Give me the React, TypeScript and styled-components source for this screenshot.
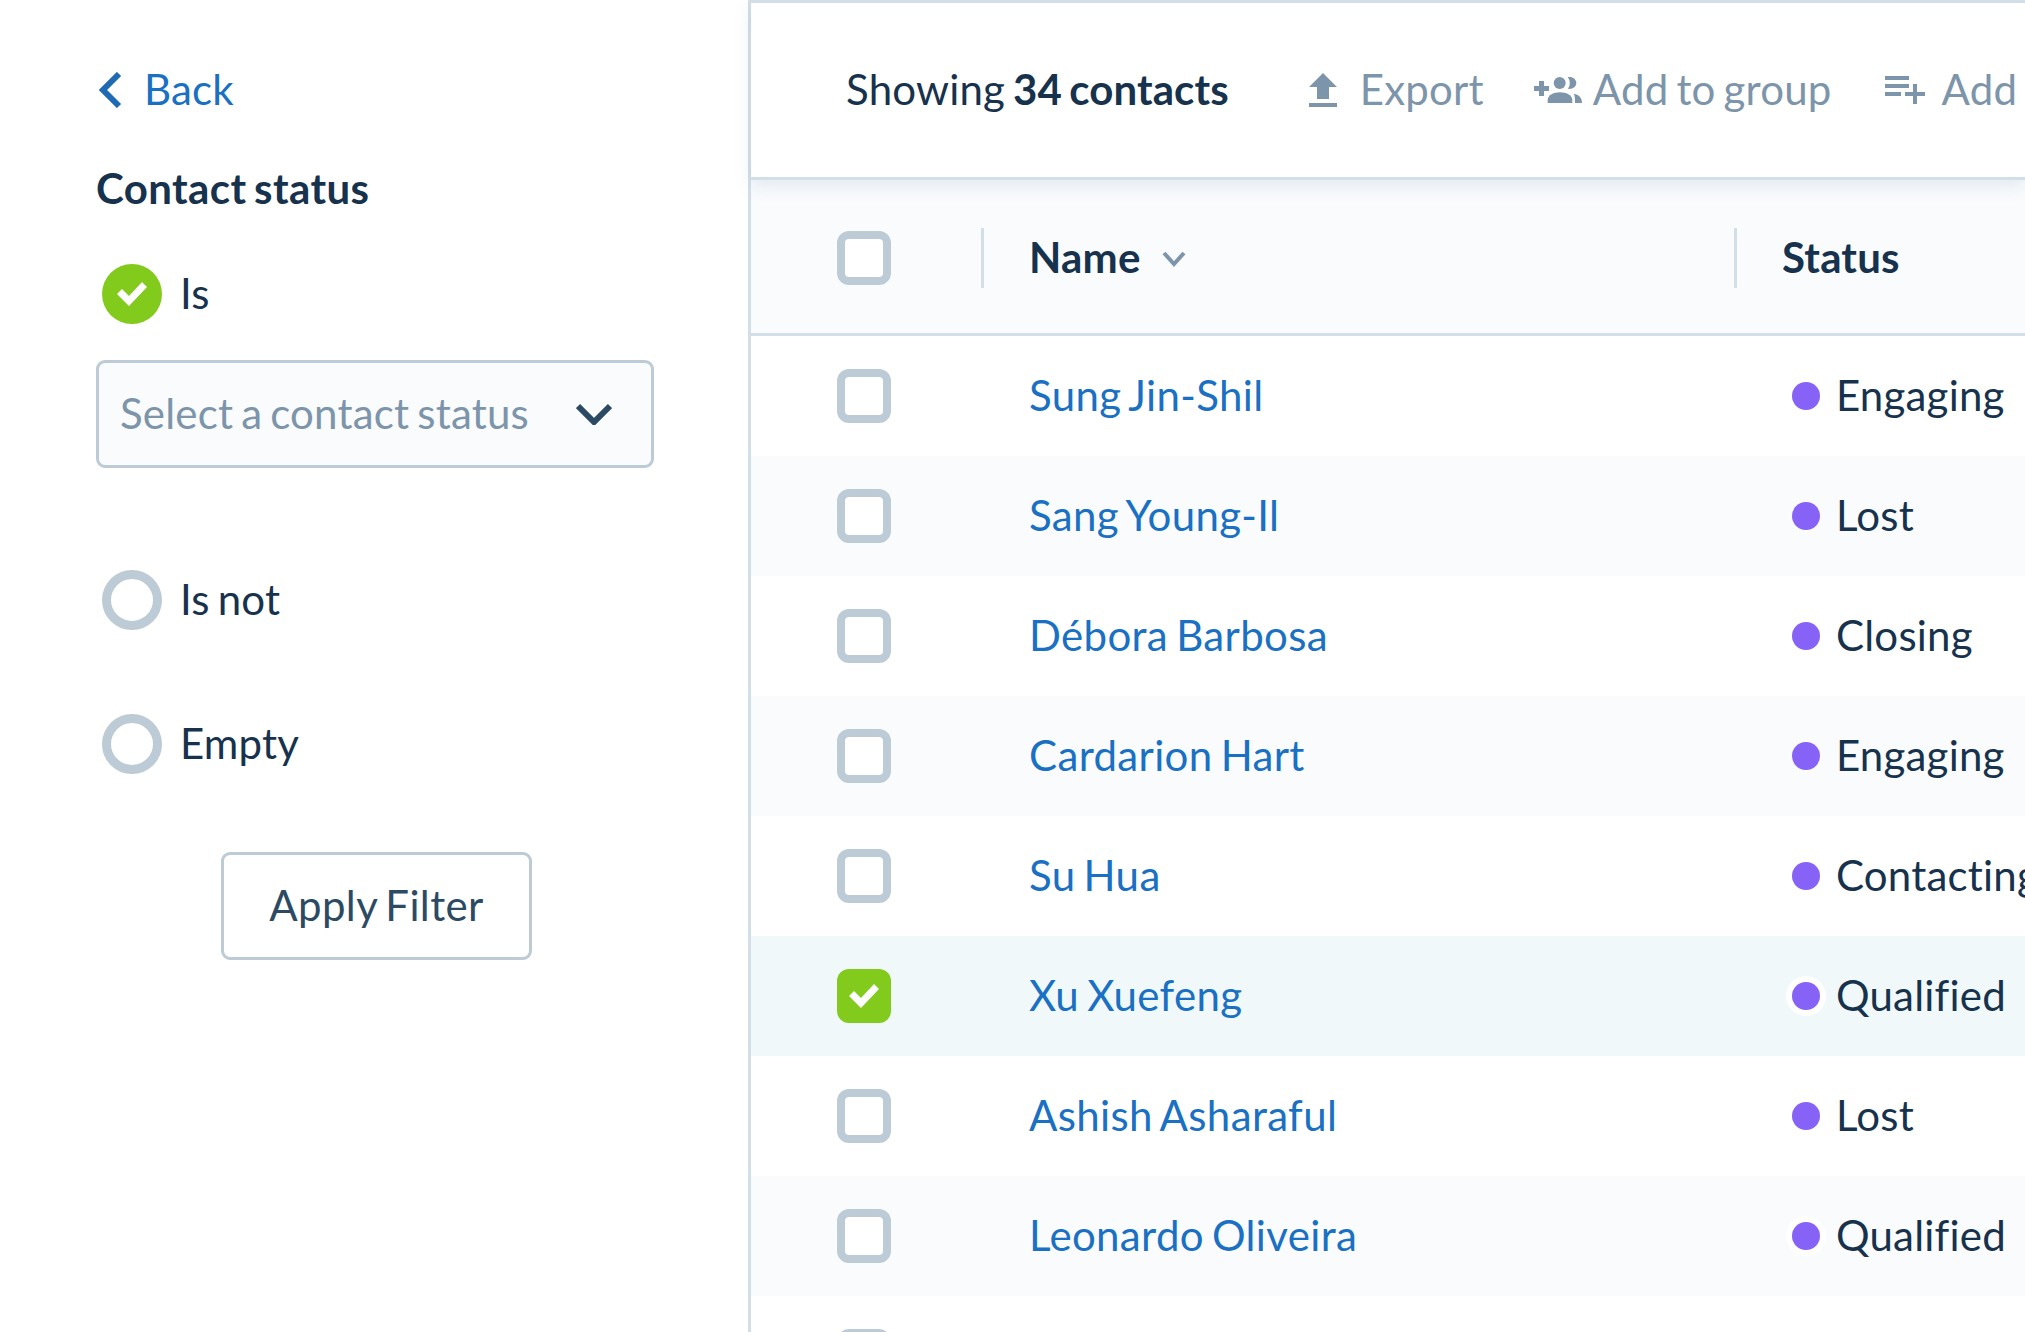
import React from 'react';
import styled, { createGlobalStyle } from 'styled-components';

const GlobalStyle = createGlobalStyle`
  html, body {
    margin: 0;
    padding: 0;
    background: #fff;
  }
  * {
    box-sizing: border-box;
  }
`;

const Page = styled.div`
  display: flex;
  width: 2025px;
  height: 1332px;
  overflow: hidden;
  font-family: Lato, "Liberation Sans", sans-serif;
  font-size: 42px;
  letter-spacing: 0.2px;
  word-spacing: -3px;
  color: #17324d;
  background: #fff;
`;

/* Text sits a little higher than its box centre in the reference */
const Label = styled.span`
  display: block;
  padding-bottom: 3px;
`;

const Sidebar = styled.aside`
  flex: 0 0 751px;
  padding: 60px 0 0 96px;
  border-right: 3px solid #d3dfe8;
`;

const BackLink = styled.a`
  display: flex;
  align-items: center;
  gap: 22px;
  height: 60px;
  padding-left: 3px;
  color: #1a70c2;
`;

const FilterTitle = styled.h2`
  margin: 38px 0 0;
  height: 60px;
  line-height: 60px;
  font-size: 42px;
  font-weight: 700;
  letter-spacing: 0.4px;
`;

const RadioRow = styled.label<{ $top: number }>`
  display: flex;
  align-items: center;
  gap: 18px;
  height: 60px;
  margin: ${(p) => p.$top}px 0 0 6px;
`;

const Radio = styled.span<{ $checked?: boolean }>`
  display: flex;
  align-items: center;
  justify-content: center;
  width: 60px;
  height: 60px;
  border-radius: 50%;
  border: ${(p) => (p.$checked ? 'none' : '9px solid #bccbd6')};
  background: ${(p) => (p.$checked ? '#82ca1c' : '#fff')};
`;

const SelectBox = styled.div`
  display: flex;
  align-items: center;
  justify-content: space-between;
  width: 558px;
  height: 108px;
  margin-top: 36px;
  padding: 0 39px 0 21px;
  border: 3px solid #bccbd6;
  border-radius: 9px;
  background: #f9fbfd;
  color: #7d95aa;
`;

const ApplyButton = styled.button`
  display: block;
  width: 311px;
  height: 108px;
  margin: 78px 0 0 125px;
  padding: 0 0 3px;
  border: 3px solid #bccbd6;
  border-radius: 9px;
  background: #fff;
  color: #2c4a63;
  font: inherit;
  letter-spacing: 0.4px;
  word-spacing: inherit;
`;

const Main = styled.main`
  flex: 1;
  min-width: 0;
`;

const Toolbar = styled.header`
  position: relative;
  display: flex;
  align-items: center;
  height: 180px;
  padding-left: 95px;
  border-top: 3px solid #d3dfe8;
  border-bottom: 3px solid #d3dfe8;
  background: #fff;
  box-shadow: 0 6px 16px rgba(120, 145, 165, 0.16);
  white-space: nowrap;
`;

const Showing = styled(Label)`
  b {
    font-weight: 700;
    letter-spacing: 0.1px;
  }
`;

const ToolAction = styled.div<{ $left: number; $gap: number }>`
  display: flex;
  align-items: center;
  flex: none;
  gap: ${(p) => p.$gap}px;
  margin-left: ${(p) => p.$left}px;
  color: #7d95aa;
`;

const HeaderRow = styled.div`
  display: grid;
  grid-template-columns: 230px 753px 1fr;
  align-items: center;
  height: 156px;
  padding-top: 3px;
  border-bottom: 3px solid #d3dfe8;
  background: #f9fbfd;
  font-weight: 700;
`;

const Row = styled.div<{ $tone: 'white' | 'alt' | 'selected' }>`
  display: grid;
  grid-template-columns: 230px 753px 1fr;
  align-items: center;
  height: 120px;
  background: ${(p) =>
    p.$tone === 'selected' ? '#f0f8fa' : p.$tone === 'alt' ? '#f9fbfd' : '#fff'};
`;

const CheckCell = styled.div`
  padding-left: 86px;
`;

const Checkbox = styled.span<{ $checked?: boolean }>`
  display: flex;
  align-items: center;
  justify-content: center;
  width: 54px;
  height: 54px;
  border-radius: 12px;
  border: ${(p) => (p.$checked ? 'none' : '8px solid #bccbd6')};
  background: ${(p) => (p.$checked ? '#82ca1c' : '#fff')};
`;

const HeaderCell = styled.div`
  display: flex;
  align-items: center;
  height: 60px;
  padding-left: 45px;
  border-left: 3px solid #d3dfe8;
`;

const SortIcon = styled.svg`
  width: 24px;
  height: 16px;
  margin: 2px 0 0 21px;
`;

const NameCell = styled.a`
  padding: 0 0 3px 48px;
  color: #1a70c2;
  letter-spacing: 0.35px;
`;

const StatusCell = styled.div`
  display: flex;
  align-items: center;
  gap: 16px;
  padding-left: 58px;
  white-space: nowrap;
`;

const StatusDot = styled.span<{ $ring?: boolean }>`
  flex: none;
  width: 28px;
  height: 28px;
  border-radius: 50%;
  background: #8762f6;
  box-shadow: ${(p) => (p.$ring ? '0 0 0 6px #fff' : 'none')};
`;

const Check = () => (
  <svg width="30" height="24" viewBox="0 0 30 24" fill="#fff">
    <path d="M25 0 L30 5 L12 24 L0 12 L5 7 L12 14 Z" />
  </svg>
);

const ExportIcon = () => (
  <svg width="28" height="34" viewBox="0 0 28 34" fill="#7d95aa">
    <path d="M14 0 L28 14 H20 V26 H8 V14 H0 Z M0 30 H28 V34 H0 Z" />
  </svg>
);

const GroupAddIcon = () => (
  <svg width="48" height="26" viewBox="0 0 48 26" fill="#7d95aa">
    <path d="M5 4 H10 V9 H15 V14 H10 V19 H5 V14 H0 V9 H5 Z" />
    <circle cx="25.7" cy="6" r="6" />
    <path d="M13.7 26 V23 C13.7 18 20 15.3 26 15.3 C32 15.3 38.3 18 38.3 23 V26 Z" />
    <path d="M33.7 0.2 C39 -0.5 42.3 2.5 42.3 6 C42.3 9.5 39 12.5 33.7 11.8 C36.5 9 36.5 3 33.7 0.2 Z" />
    <path d="M39.7 16.7 C45 17.5 48 21 48 26 H41 C41 22 41 19 39.7 16.7 Z" />
  </svg>
);

const ListAddIcon = () => (
  <svg width="40" height="28" viewBox="0 0 40 28" fill="#7d95aa">
    <path d="M0 0 H24 V4 H0 Z M0 8 H24 V12 H0 Z M0 16 H16 V20 H0 Z M28 8 H32 V16 H40 V20 H32 V28 H28 V20 H20 V16 H28 Z" />
  </svg>
);

const contacts = [
  { name: 'Sung Jin-Shil', status: 'Engaging' },
  { name: 'Sang Young-Il', status: 'Lost' },
  { name: 'Débora Barbosa', status: 'Closing' },
  { name: 'Cardarion Hart', status: 'Engaging' },
  { name: 'Su Hua', status: 'Contacting' },
  { name: 'Xu Xuefeng', status: 'Qualified', selected: true },
  { name: 'Ashish Asharaful', status: 'Lost' },
  { name: 'Leonardo Oliveira', status: 'Qualified' },
  { name: '', status: '' },
];

const rowTone = (index: number, selected?: boolean) => {
  if (selected) return 'selected';
  return index % 2 === 1 ? 'alt' : 'white';
};

export default function App() {
  return (
    <Page>
      <GlobalStyle />
      <Sidebar>
        <BackLink>
          <svg width="23" height="36" viewBox="0 0 23 36" fill="none">
            <path d="M20 2 L4 18 L20 34" stroke="#1f6bb3" strokeWidth="6" />
          </svg>
          <Label>Back</Label>
        </BackLink>
        <FilterTitle>Contact status</FilterTitle>
        <RadioRow $top={46}>
          <Radio $checked>
            <Check />
          </Radio>
          <Label>Is</Label>
        </RadioRow>
        <SelectBox>
          <Label>Select a contact status</Label>
          <svg width="36" height="22" viewBox="0 0 36 22" fill="none">
            <path d="M2 3 L18 19 L34 3" stroke="#2c4a63" strokeWidth="6" />
          </svg>
        </SelectBox>
        <RadioRow $top={102}>
          <Radio />
          <Label>Is not</Label>
        </RadioRow>
        <RadioRow $top={84}>
          <Radio />
          <Label>Empty</Label>
        </RadioRow>
        <ApplyButton>Apply Filter</ApplyButton>
      </Sidebar>
      <Main>
        <Toolbar>
          <Showing>
            Showing <b>34 contacts</b>
          </Showing>
          <ToolAction $left={80} $gap={23}>
            <ExportIcon />
            <Label>Export</Label>
          </ToolAction>
          <ToolAction $left={50} $gap={11}>
            <GroupAddIcon />
            <Label>Add to group</Label>
          </ToolAction>
          <ToolAction $left={53} $gap={17}>
            <ListAddIcon />
            <Label>Add to list</Label>
          </ToolAction>
        </Toolbar>
        <HeaderRow>
          <CheckCell>
            <Checkbox />
          </CheckCell>
          <HeaderCell>
            <Label>Name</Label>
            <SortIcon viewBox="0 0 24 16" fill="none">
              <path d="M2 2 L12 13 L22 2" stroke="#7d95aa" strokeWidth="4" />
            </SortIcon>
          </HeaderCell>
          <HeaderCell>
            <Label>Status</Label>
          </HeaderCell>
        </HeaderRow>
        {contacts.map((contact, index) => (
          <Row key={index} $tone={rowTone(index, contact.selected)}>
            <CheckCell>
              <Checkbox $checked={contact.selected}>
                {contact.selected && <Check />}
              </Checkbox>
            </CheckCell>
            <NameCell>{contact.name}</NameCell>
            {contact.status && (
              <StatusCell>
                <StatusDot $ring={contact.status === 'Qualified'} />
                <Label>{contact.status}</Label>
              </StatusCell>
            )}
          </Row>
        ))}
      </Main>
    </Page>
  );
}
